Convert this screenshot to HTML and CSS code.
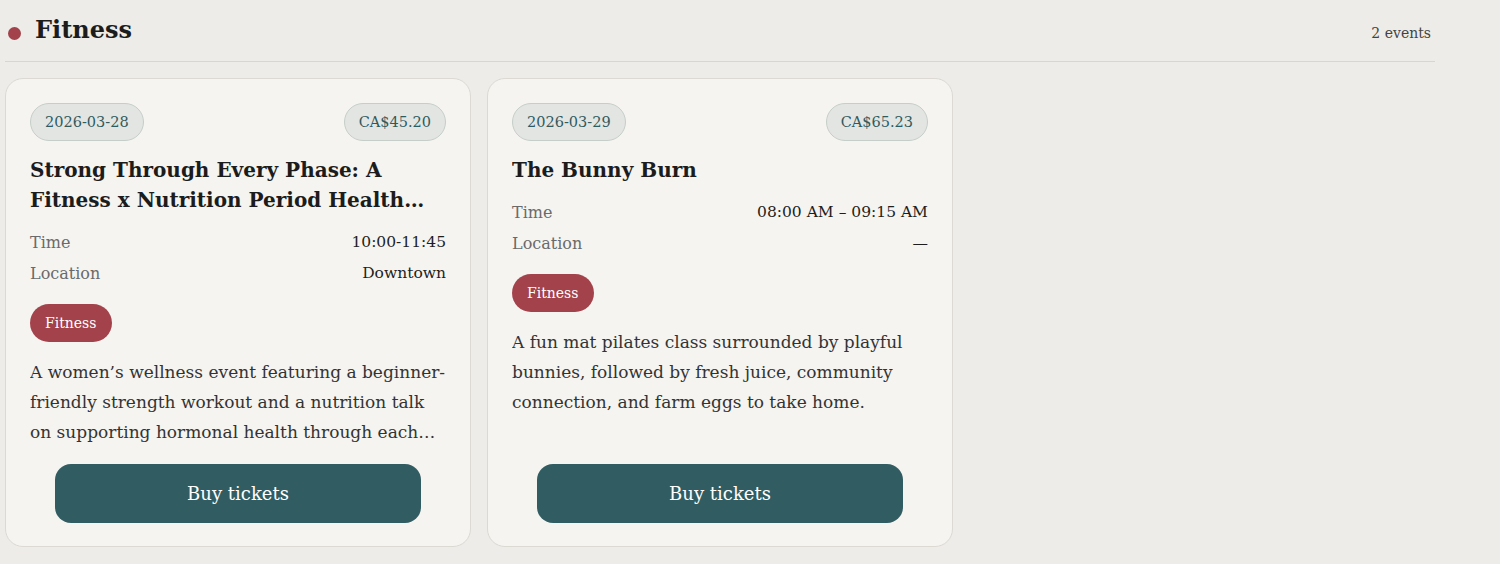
FILE: index.html
```html
<!DOCTYPE html>
<html lang="en">
<head>
<meta charset="utf-8">
<title>Fitness events</title>
<link rel="stylesheet" href="styles.css">
</head>
<body>
<section class="category">
  <header class="category-head">
    <div class="category-title">
      <span class="dot"></span>
      <h2>Fitness</h2>
    </div>
    <span class="count">2 events</span>
  </header>
  <div class="grid">
    <article class="card">
      <div class="pills">
        <span class="pill">2026-03-28</span>
        <span class="pill">CA$45.20</span>
      </div>
      <h3 class="title">Strong Through Every Phase: A Fitness x Nutrition Period Health Workshop</h3>
      <dl class="meta">
        <div class="row"><dt>Time</dt><dd>10:00-11:45</dd></div>
        <div class="row"><dt>Location</dt><dd>Downtown</dd></div>
      </dl>
      <div class="tags"><span class="tag">Fitness</span></div>
      <p class="desc">A women’s wellness event featuring a beginner-friendly strength workout and a nutrition talk on supporting hormonal health through each phase of your cycle.</p>
      <a class="btn" href="#">Buy tickets</a>
    </article>
    <article class="card">
      <div class="pills">
        <span class="pill">2026-03-29</span>
        <span class="pill">CA$65.23</span>
      </div>
      <h3 class="title">The Bunny Burn</h3>
      <dl class="meta">
        <div class="row"><dt>Time</dt><dd>08:00 AM – 09:15 AM</dd></div>
        <div class="row"><dt>Location</dt><dd>—</dd></div>
      </dl>
      <div class="tags"><span class="tag">Fitness</span></div>
      <p class="desc">A fun mat pilates class surrounded by playful bunnies, followed by fresh juice, community connection, and farm eggs to take home.</p>
      <a class="btn" href="#">Buy tickets</a>
    </article>
  </div>
</section>
</body>
</html>
```
FILE: styles.css
```css
* { box-sizing: border-box; }
html, body { margin: 0; padding: 0; }
body {
  background: #edece8;
  font-family: "DejaVu Serif", "Liberation Serif", serif;
  color: #1e1e1e;
}
.category {
  width: 1440px;
  padding: 0 5px;
}
.category-head {
  display: flex;
  justify-content: space-between;
  align-items: flex-end;
  padding: 12px 4px 13px 3px;
  border-bottom: 1px solid #d9d6d1;
}
.category-title {
  display: flex;
  align-items: center;
  gap: 14px;
}
.dot {
  width: 13px;
  height: 13px;
  border-radius: 50%;
  background: #a3424b;
  margin-top: 7px;
}
.category-title h2 {
  margin: 0;
  font-size: 24px;
  line-height: 36px;
  font-weight: 700;
  color: #1c1c1c;
}
.count {
  font-size: 14px;
  color: #444;
  line-height: 30px;
}
.grid {
  display: grid;
  grid-template-columns: repeat(3, 1fr);
  gap: 16px;
  margin-top: 16px;
}
.card {
  display: flex;
  flex-direction: column;
  background: #f5f4f0;
  border: 1px solid #dcd9d3;
  border-radius: 18px;
  padding: 24px 24px 23px;
}
.pills {
  display: flex;
  justify-content: space-between;
}
.pill {
  display: inline-flex;
  align-items: center;
  height: 38px;
  padding: 0 14px;
  border-radius: 19px;
  background: #e3e5e2;
  border: 1px solid #c6ceca;
  color: #2f5b5f;
  font-size: 14.5px;
}
.title {
  margin: 14px 0 0;
  font-size: 20px;
  line-height: 30px;
  font-weight: 700;
  color: #1c1c1c;
  display: -webkit-box;
  -webkit-box-orient: vertical;
  -webkit-line-clamp: 2;
  overflow: hidden;
}
.meta {
  margin: 12px 0 0;
}
.row {
  display: flex;
  justify-content: space-between;
  font-size: 16px;
  line-height: 31px;
}
.row dt { color: #6a6a6a; }
.row dd { margin: 0; color: #1e1e1e; font-size: 15.5px; }
.tags {
  margin-top: 15px;
  display: flex;
}
.tag {
  display: inline-flex;
  align-items: center;
  height: 38px;
  padding: 0 15px;
  border-radius: 19px;
  background: #a3424b;
  color: #fff;
  font-size: 14px;
}
.desc {
  margin: 15px 0 17px;
  font-size: 17px;
  line-height: 30px;
  color: #333;
  display: -webkit-box;
  -webkit-box-orient: vertical;
  -webkit-line-clamp: 3;
  overflow: hidden;
}
.btn {
  margin: auto 25px 0;
  height: 59px;
  border-radius: 16px;
  background: #315d62;
  color: #fff;
  text-decoration: none;
  font-size: 18px;
  display: flex;
  align-items: center;
  justify-content: center;
}
```
